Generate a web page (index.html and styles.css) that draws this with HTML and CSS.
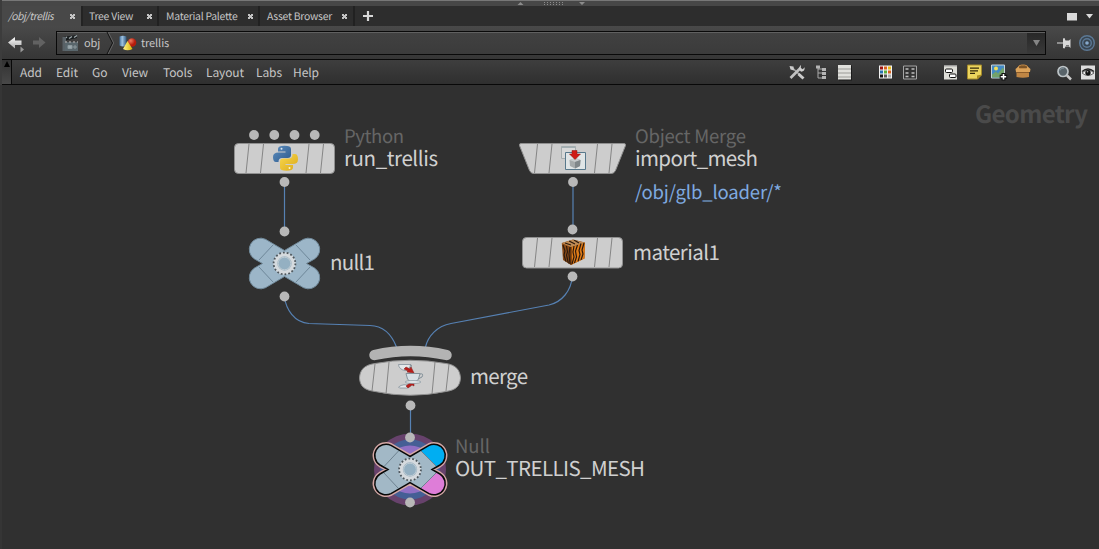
FILE: index.html
```html
<!DOCTYPE html>
<html lang="en">
<head>
<meta charset="utf-8">
<title>/obj/trellis</title>
<link rel="stylesheet" href="styles.css">
</head>
<body>
<div class="pane">
  <div class="splitter">
    <svg width="50" height="6" viewBox="515 0 50 6"><path d="M517.500 5l3-3 3 3zM579 2h6l-3 3z" fill="#8b8b8b"/><path d="M544 2.500h21M544 4.500h21" stroke="#8b8b8b" stroke-dasharray="1 2"/></svg>
  </div>
  <div class="tabs">
    <div class="tab tab-active"><span>/obj/trellis</span><i class="close"></i></div>
    <div class="tab tab-tree"><span>Tree View</span><i class="close"></i></div>
    <div class="tab tab-material"><span>Material Palette</span><i class="close"></i></div>
    <div class="tab tab-asset"><span>Asset Browser</span><i class="close"></i></div>
    <div class="tab-add"><svg width="10" height="10"><path d="M5 0v10M0 5h10" stroke="#d8d8d8" stroke-width="2.200"/></svg></div>
    <svg class="pane-controls" width="30" height="10"><path d="M1 1h10v7.500H1z" fill="#dadada"/><path d="M20 2h7l-3.500 4.500z" fill="#dadada"/></svg>
  </div>
  <div class="path-row">
    <svg class="history" width="46" height="20" viewBox="0 33 46 20">
      <defs><linearGradient id="arrow" x2="0" y2="1"><stop stop-color="#fff"/><stop offset="1" stop-color="#aaa"/></linearGradient></defs>
      <path d="M8 42.500l7-5.500v3.500h6.500v4.500H15v3.500z" fill="url(#arrow)"/><path d="M20.500 46.500v6l3.500-3z" fill="#999"/>
      <path d="M45.500 42.500l-6.500-5.500v3.500h-6v4h6V48z" fill="#626262"/>
    </svg>
    <div class="path-box">
      <svg class="clapper" width="17" height="18" viewBox="62 34 17 18"><path d="M63 37l14-2v3l-14 3z" fill="#171b1d"/><path d="M64 39l3-2M69 38.500l3-2M74 37.500l3-2" stroke="#9ca5a8" stroke-width="1.500"/><path d="M62.500 37h3.500v14h-3.500z" fill="#596166"/><path d="M65 42h13v9H65z" fill="#59666c"/><path d="M65 42h13" stroke="#999" stroke-width="1.500" stroke-dasharray="2 2"/><path d="M68 45.500h4v3h-4zM73 47h4M75 45v4" fill="#9aa8ae" stroke="#8d999d"/></svg>
      <span class="crumb-obj">obj</span>
      <svg class="chevron" width="8" height="22"><path d="M1 0l5.500 11L1 22" fill="none" stroke="#111"/><path d="M2.200 0l5.500 11-5.500 11" fill="none" stroke="#626262"/></svg>
      <svg class="shapes" width="18" height="18" viewBox="119 34 18 18"><defs><radialGradient id="ball" cx=".35" cy=".3"><stop stop-color="#f07c60"/><stop offset="1" stop-color="#b51c0c"/></radialGradient><linearGradient id="tube"><stop stop-color="#4675a4"/><stop offset=".4" stop-color="#9fc2e0"/><stop offset="1" stop-color="#31587f"/></linearGradient><linearGradient id="cone"><stop stop-color="#fff48f"/><stop offset="1" stop-color="#d9b407"/></linearGradient></defs><path d="M119.500 36.500q3.500-1.500 7 0v9q-3.500 2-7 0z" fill="url(#tube)"/><circle cx="132" cy="42.500" r="4.300" fill="url(#ball)"/><path d="M127.500 41l5 8q-5 2.500-9.500 0z" fill="url(#cone)"/></svg>
      <span class="crumb-trellis">trellis</span>
      <span class="path-drop"><svg width="7" height="6"><path d="M0 0h7L3.500 6z" fill="#858585"/></svg></span>
    </div>
    <svg class="path-tools" width="44" height="20" viewBox="1054 33 44 20">
      <path d="M1057 43h6" stroke="#aaa" stroke-width="1.500"/><path d="M1063 38.500l1.500-.5 1 2.500h3.500l1.500-1.500V48l-1.500-1.500h-3.500l-1 2-1.500-.5z" fill="#d8d8d8"/><path d="M1066 45.500h3" stroke="#777"/>
      <g fill="none" stroke="#5c7894" stroke-width="1.400"><circle cx="1087" cy="43" r="7.300" fill="#384550"/><circle cx="1087" cy="43" r="4.300"/></g><circle cx="1087" cy="43" r="1.800" fill="#86a9cc"/>
    </svg>
  </div>
  <div class="menu-row">
    <div class="menu-handle"><svg width="8" height="7"><path d="M4 0l3 6H1z"/></svg></div>
    <nav class="menu"><span class="m-add">Add</span><span class="m-edit">Edit</span><span class="m-go">Go</span><span class="m-view">View</span><span class="m-tools">Tools</span><span class="m-layout">Layout</span><span class="m-labs">Labs</span><span class="m-help">Help</span></nav>
    <svg class="toolbar" width="312" height="22" viewBox="787 61.500 312 22">
      <!-- wrench and screwdriver -->
      <path d="M792 68l9 8.500" stroke="#a4a4a4" stroke-width="1.700"/><path d="M798.500 74.500l5 4.500" stroke="#ccc" stroke-width="3"/><path d="M790.500 78.500l10-10" stroke="#c0c0c0" stroke-width="2.600"/><path d="M799.500 70.500q-1-3 1.500-5l-.2 3 2 1.200 1.800-2q.5 4-3.500 4.500z" fill="#d0d0d0"/><path d="M789.500 66.500l4 .5.500 4-3.500-1z" fill="#ccc"/>
      <!-- tree -->
      <path d="M818 67v11.500h4M818 73.500h4M818 69.500h4" fill="none" stroke="#aaa"/><path d="M816 66h4v3h-4zM822 68.500h4v3h-4zM822 72.500h4v3h-4zM822 76.500h4v3h-4z" fill="#b5b5b5"/>
      <!-- list -->
      <path d="M839 66h13v15h-13z" fill="#1b1b1b"/><path d="M838 65.500h13v14.500h-13z" fill="#e0e0dc"/><path d="M838 69.500h13M838 73.500h13M838 77.500h13" stroke="#b1b1ad" stroke-width="1.500"/>
      <!-- palette -->
      <path d="M879 66h13v13h-13z" fill="#f2f2f2"/><path d="M880 67h3v3h-3z" fill="#9e1714"/><path d="M884 67h3v3h-3zM888 71h3v3h-3z" fill="#d9601d"/><path d="M888 67h3v3h-3z" fill="#ecbc19"/><path d="M880 71h3v3h-3z" fill="#2a72b2"/><path d="M884 71h3v3h-3z" fill="#58ae3a"/><path d="M880 75h3v3h-3z" fill="#171717"/><path d="M884 75h3v3h-3z" fill="#555"/><path d="M888 75h3v3h-3z" fill="#aaa"/>
      <!-- grid -->
      <path d="M903.500 66.500h13v13h-13z" fill="#333" stroke="#a5a5a5"/><path d="M905.500 69.500h4M911.500 69.500h4M905.500 73.500h4M911.500 73.500h4M905.500 77h4M911.500 77h4" stroke="#c0c0c0" stroke-width="1.600" stroke-dasharray="3 1"/>
      <!-- network box -->
      <path d="M944 66h13v14h-13z" fill="#deded8"/><path d="M944 66.500h13" stroke="#aaa"/><rect x="945.500" y="69.500" width="7" height="3.500" rx="1" fill="#fff" stroke="#111"/><rect x="949.500" y="74.500" width="6.500" height="3.500" rx="1" fill="#fff" stroke="#111"/>
      <!-- sticky note -->
      <path d="M967.500 65.500h14v10l-4 4h-10z" fill="#ecd55e" stroke="#a3892b"/><path d="M982 75l-5 5v-4z" fill="#a98b21"/><path d="M970 68.700h9M970 71.300h8M970 73.900h5" stroke="#33280a" stroke-width="1.200"/>
      <!-- image -->
      <path d="M991.500 65.500h13v13h-13z" fill="#438ac5" stroke="#c7d2d8"/><circle cx="996" cy="69" r="2" fill="#f3df5a"/><path d="M992 78v-3l4-3 2 2 5-6 1 2v8z" fill="#73a26b"/><path d="M1003.500 73.500v7.500M999.700 77.300h7.500" stroke="#111" stroke-width="4"/><path d="M1003.500 74.500v5.500M1000.700 77.300h5.500" stroke="#fff" stroke-width="1.600"/>
      <!-- box -->
      <path d="M1016.500 72h12.500v5.500q-6 1.500-12.500 0z" fill="#c08644"/><path d="M1018 69q0-3.500 3.500-3.500h3q3.500 0 3.500 3.500z" fill="#7c5427" stroke="#c28a48"/><path d="M1015.500 69.500l3-2.500 1 2.500h7l1-2.500 3 2.500-.5 3h-14z" fill="#dca35a"/><path d="M1016.500 73h12.500" stroke="#8c5c2a"/>
      <!-- search -->
      <circle cx="1063" cy="72" r="5" fill="#59646a" stroke="#bdc4c7" stroke-width="1.700"/><path d="M1067 76l4 4" stroke="#ccc" stroke-width="2.500"/><path d="M1060 71q1-3 4-2.500" fill="none" stroke="#85949e"/>
      <!-- eye -->
      <path d="M1081 66h14v14h-14z" fill="#ddd"/><path d="M1082 73.500q6-6 12 0-6 5-12 0z" fill="#eee" stroke="#444" stroke-width=".8"/><path d="M1082 72q6-5 12 0" fill="none" stroke="#222" stroke-width="1.400"/><circle cx="1088" cy="73.300" r="2.700" fill="#111"/><circle cx="1087.500" cy="72.300" r=".8" fill="#aaa"/>
    </svg>
  </div>
  <main class="network">
    <svg width="1099" height="464" viewBox="0 85 1099 464">
      <defs>
        <path id="cross-shape" d="M284.500 250.500L303.500 239.300A11.300 11.300 0 0 1 314.500 259L306.500 263.500 314.500 268A11.300 11.300 0 0 1 303.500 287.700L284.500 276.500 265.500 287.700A11.300 11.300 0 0 1 254.500 268L262.500 263.500 254.500 259A11.300 11.300 0 0 1 265.500 239.300Z"/>
        <g id="ring"><circle cx="284.500" cy="263.500" r="9.200" fill="#9fb6c5" stroke="#d5dade" stroke-width="4"/><circle cx="284.500" cy="263.500" r="10.900" fill="none" stroke="#4d565c" stroke-width="1.800" stroke-dasharray="1.800 2.005"/><circle cx="284.500" cy="263.500" r="6.300" fill="#94b0c2" stroke="#bdcbd3"/></g>
        <g id="slats" fill="none" stroke="#858585" stroke-width="1"><path d="M249 144l-3 29M263.500 144l-3 29M309 144l-3 29M323.500 144l-3 29"/></g>
        <clipPath id="output-clip"><use href="#cross-shape" x="125.500" y="206"/></clipPath>
        <clipPath id="tiger-clip"><path d="M561.800 243l11.200-3.500 12 3-.5 16-13.500 6.500-8-5z"/></clipPath>
        <linearGradient id="pyBlue" x2="1" y2="1"><stop stop-color="#5f8fc0"/><stop offset="1" stop-color="#2c5a8c"/></linearGradient>
        <linearGradient id="pyYellow" x2="1" y2="1"><stop stop-color="#f8d84f"/><stop offset="1" stop-color="#dba919"/></linearGradient>
      </defs>
      <g fill="none" stroke="#5681b3" stroke-width="1.200">
        <path d="M284.500 182v49M573 182v47M410.500 406v31"/>
        <path d="M284.500 297C286 309 294 322.500 309 323.500L370 325.500C386 326 393 338 396.500 347M572.500 276C571 291 562 302 549 305L451 323.500C437 326 428 336 425.500 347"/>
      </g>

      <!-- run_trellis -->
      <g fill="#b8b8b8"><circle cx="254" cy="135" r="4.900"/><circle cx="274.300" cy="135" r="4.900"/><circle cx="294.500" cy="135" r="4.900"/><circle cx="314.700" cy="135" r="4.900"/></g>
      <rect x="234.500" y="143.500" width="100" height="30" rx="4" fill="#cdcdcd" stroke="#909090"/>
      <use href="#slats"/>
      <path d="M278.500 152.500h7v-1h-7.500v-2.500q0-3.200 6.500-3.200 6.500 0 6.500 3.200v6q0 3-3.500 3h-5.500q-3.500 0-3.500 4h-2.500q-3 0-3-5 0-4.500 5.500-4.500z" fill="url(#pyBlue)"/>
      <path d="M292.500 164h-7v1h7.500v2.500q0 3.200-6.500 3.200-6.500 0-6.500-3.200v-6q0-3 3.500-3h5.500q3.500 0 3.500-4.500h2.500q3 0 3 5.500 0 4.500-5.500 4.500z" fill="url(#pyYellow)"/>
      <circle cx="281.500" cy="148.700" r="1" fill="#dce8f0"/><circle cx="289.500" cy="168" r="1" fill="#fff7cc"/>
      <circle cx="284.500" cy="182" r="4.900" fill="#b8b8b8"/>
      <text class="type" x="344" y="142.500" textLength="60">Python</text>
      <text class="name" x="344" y="166" textLength="94">run_trellis</text>

      <!-- import_mesh -->
      <path d="M521 143.500h103q2 0 1.500 2l-10 25q-1.500 3-4 3h-78q-2.500 0-4-3l-10-25q-.5-2 1.500-2z" fill="#cdcdcd" stroke="#909090"/>
      <use href="#slats" x="288.500"/>
      <path d="M561.500 146.500h14v12h-14z" fill="#d8d9d9" stroke="#a6adae"/><path d="M561.500 146.500h14v1.500h-14z" fill="#a3afb3"/>
      <path d="M565.500 152.500h20v17h-20z" fill="#e0e5e6" stroke="#58788b"/><path d="M569.500 160l6-2 5 2-.5 6-5 2.500-5-2.500z" fill="#a5aaab"/><path d="M569.500 160l5.500 2 5.500-2-5-2z" fill="#c6cacb"/><path d="M575 162v6.500l5-2.500.5-6z" fill="#80878a"/>
      <path d="M572 150.500h5v3.500h3.500l-5.500 5.500-5.500-5.500h2.500z" fill="#cf1b16" stroke="#8e1410" stroke-width=".5"/>
      <circle cx="573" cy="182" r="4.900" fill="#b8b8b8"/>
      <text class="type" x="635" y="142.500" textLength="111">Object Merge</text>
      <text class="name" x="635" y="166" textLength="123">import_mesh</text>
      <text class="reference" x="635" y="198.500" textLength="147">/obj/glb_loader/*</text>

      <!-- null1 -->
      <circle cx="284.500" cy="231.500" r="4.900" fill="#b8b8b8"/>
      <use href="#cross-shape" fill="#9cb6c8" stroke="#718a9b"/>
      <path d="M273 245l-14 15M296 245l14 15M259 267l14 15M310 267l-14 15" stroke="#6e8799"/>
      <use href="#ring"/>
      <circle cx="284.500" cy="296.500" r="4.900" fill="#b8b8b8"/>
      <text class="name" x="330" y="270" textLength="45">null1</text>

      <!-- material1 -->
      <circle cx="572.500" cy="229.500" r="4.900" fill="#b8b8b8"/>
      <rect x="522.500" y="237.500" width="100" height="30.500" rx="4" fill="#cdcdcd" stroke="#909090"/>
      <use href="#slats" x="288.500" y="94"/>
      <g clip-path="url(#tiger-clip)"><path d="M560 238h26v28h-26z" fill="#8b4a16"/><path d="M571 247l14.500-5v17l-14.500 6z" fill="#df7b18"/><path d="M561.500 243l11.500-3.500 12.500 3-14.500 4.500z" fill="#c08b54"/><path d="M563 245l2 6-1 4 2 7M566.500 246l1 6-1 3 2 9M570 247l-1 7 1 10M565 243l6 2M569 241l6 3M574 240l5 3M574 246l-1 6 1 5-2 7M577.500 245l-2 6 1 6-2 6M581 243.500l-2 7 1 4-2 7M584 243l-2 7 1 4-2 6" fill="none" stroke="#2b190d" stroke-width="1.200"/><path d="M571 247v18" stroke="#402009"/></g>
      <circle cx="572.500" cy="276.500" r="4.900" fill="#b8b8b8"/>
      <text class="name" x="633" y="260" textLength="87">material1</text>

      <!-- merge -->
      <path d="M374.500 355Q410.500 347 446.500 355" fill="none" stroke="#b3b3b3" stroke-width="10.500" stroke-linecap="round"/>
      <path d="M375 363.500Q410 357 446 363.500C456 365 460 370 460.500 378 460 386 456 390 446 391.500Q410 399 375 391.500C364 390 360 386 359.500 378 360 370 364 365 375 363.500z" fill="#cdcdcd" stroke="#909090"/>
      <path d="M375 364l-3 27M389 362l-3 32M435 362l-3 32M449 364l-3 27" stroke="#858585"/>
      <path d="M398.500 364.500h12q-.5 5-5.500 6-6-1-6.500-6zM398.500 387q5-4 12-1l-3 2h-8z" fill="#e4e8ea" stroke="#84919a" stroke-width=".8"/><path d="M410 365q3-1 0 4" fill="none" stroke="#7c8991"/>
      <path d="M406 367l4 2 1-2 3 6-7-1 1-1-4-2zM406 386l4-3-2-1 6-1v5l-2-1-4 3z" fill="#b91e1b" stroke="#811818" stroke-width=".5"/>
      <path d="M406 373.500h14q-1 7-4 8h-6q-3-1-4-8z" fill="#d7e0e6" stroke="#84939c"/><path d="M420 374q4-1 2 3l-4 2" fill="none" stroke="#818f98"/><ellipse cx="413" cy="382" rx="8" ry="1.500" fill="#dfe5e8" stroke="#85939c" stroke-width=".7"/>
      <circle cx="410.500" cy="405.500" r="4.900" fill="#b8b8b8"/>
      <text class="name" x="470" y="384" textLength="58">merge</text>

      <!-- OUT_TRELLIS_MESH -->
      <circle cx="410" cy="469.500" r="36" fill="#67426c"/><circle cx="410" cy="469.500" r="30" fill="#455f95"/><circle cx="410" cy="469.500" r="24" fill="#9070c4"/>
      <use href="#cross-shape" x="125.500" y="206" fill="#a8bac6" stroke="#d4a7a5" stroke-width="4.400" stroke-linejoin="round"/>
      <g clip-path="url(#output-clip)"><path d="M370 430h80v80h-80z" fill="#a2b8c6"/><path d="M421 451l15 15h20v-40h-30z" fill="#00aef2"/><path d="M421 488l15-15h20v40h-30z" fill="#de7dd8"/><path d="M398.500 451l-14 15M421 451l15 15M384 473l14 15M436 473l-15 15" stroke="#6e8290"/></g>
      <use href="#cross-shape" x="125.500" y="206" fill="none" stroke="#080808" stroke-width="1.500"/>
      <use href="#ring" x="125.500" y="206"/>
      <circle cx="410" cy="437.500" r="4.900" fill="#b8b8b8"/><circle cx="410" cy="502.500" r="4.900" fill="#b8b8b8"/>
      <text class="type" x="455" y="453" textLength="35">Null</text>
      <text class="name" x="455" y="476" textLength="190">OUT_TRELLIS_MESH</text>
      <text class="context" x="975" y="123" textLength="113">Geometry</text>
    </svg>
  </main>
</div>
</body>
</html>
```
FILE: styles.css
```css
* { box-sizing: border-box; }
body { margin: 0; overflow: hidden; background: #303030; color: #c6c6c6; font-family: "Noto Sans CJK SC", "Noto Sans", sans-serif; text-rendering: geometricPrecision; }
svg { display: block; flex: none; }
.pane { width: 1099px; height: 549px; display: flex; flex-direction: column; border-left: 2px solid #3c3c3c; }
.splitter { height: 6px; flex: none; display: flex; padding-left: 513px; background: #474747; border-top: 1px solid #777; }
.splitter svg { overflow: visible; margin-top: -1px; }
.tabs { height: 20px; flex: none; display: flex; align-items: stretch; background: #2d2d2d; font-size: 10.4px; line-height: 20px; }
.tab { display: flex; align-items: center; justify-content: space-between; padding: 0 6px 0 8px; background: #2d2d2d; border-right: 2px solid #212121; white-space: nowrap; letter-spacing: -0.25px; }
.tab-active { width: 81px; padding-left: 6px; padding-right: 6px; border-color: #232323; background: #484848; font-style: italic; letter-spacing: -0.45px; }
.tab-tree { width: 76px; padding-left: 6px; padding-right: 5px; }
.tab-material { width: 101px; padding-left: 7px; padding-right: 5px; }
.tab-asset { width: 95px; padding-left: 7px; padding-right: 6px; }
.close { width: 5px; height: 5px; background: linear-gradient(45deg, transparent 38%, #c4c4c4 39% 61%, transparent 62%), linear-gradient(-45deg, transparent 38%, #c4c4c4 39% 61%, transparent 62%); }
.tab-add { width: 20px; padding: 5px 0 0 8px; }
.pane-controls { margin: 6px 3px 0 auto; }
.path-row { height: 33px; flex: none; display: flex; align-items: flex-start; background: linear-gradient(#494949, #363636); }
.history { margin: 7px 8px 0 -2px; }
.path-box { margin-top: 5px; margin-left: 2px; width: 990px; height: 24px; display: flex; align-items: center; border: 1px solid #090909; background: linear-gradient(#414141, #3b3b3b); box-shadow: inset 0 1px #606060; font-size: 11px; line-height: 22px; letter-spacing: -0.1px; }
.clapper { margin-left: 5px; }
.crumb-obj { width: 22px; margin-left: 5px; }
.shapes { margin-left: 5px; }
.crumb-trellis { margin-left: 4px; }
.path-drop { width: 18px; height: 21px; margin: 1px 0 0 auto; padding: 7px 0 0 6px; background: linear-gradient(#282828, #393939); }
.path-tools { margin: 7px 0 0 8px; }
.menu-row { height: 26px; flex: none; display: flex; align-items: center; background: linear-gradient(#3e3e3e, #2f2f2f); border-top: 1px solid #080808; border-bottom: 1px solid #080808; }
.menu-handle { width: 10px; height: 24px; border-right: 1px solid #080808; background: linear-gradient(#323232, #484848); padding: 1px; }
.menu { display: flex; padding: 1px 0 0 8px; font-size: 12px; line-height: 24px; letter-spacing: -0.1px; }
.m-add, .m-edit { width: 36px; }
.m-go { width: 30px; }
.m-view { width: 41px; }
.m-tools { width: 43px; }
.m-layout { width: 50px; }
.m-labs { width: 37px; }
.m-help { width: 40px; }
.toolbar { margin-left: auto; }
.network { height: 464px; margin-left: -2px; background: #303030; border-left: 2px solid #353535; }
.network svg { margin-left: -2px; overflow: visible; }
.name { font-size: 20.5px; fill: #d0d0d0; }
.type { font-size: 18.5px; fill: #666; }
.reference { font-size: 18.5px; fill: #7faae0; }
.context { font-size: 24px; font-weight: 700; fill: #4a4a4a; }
```
